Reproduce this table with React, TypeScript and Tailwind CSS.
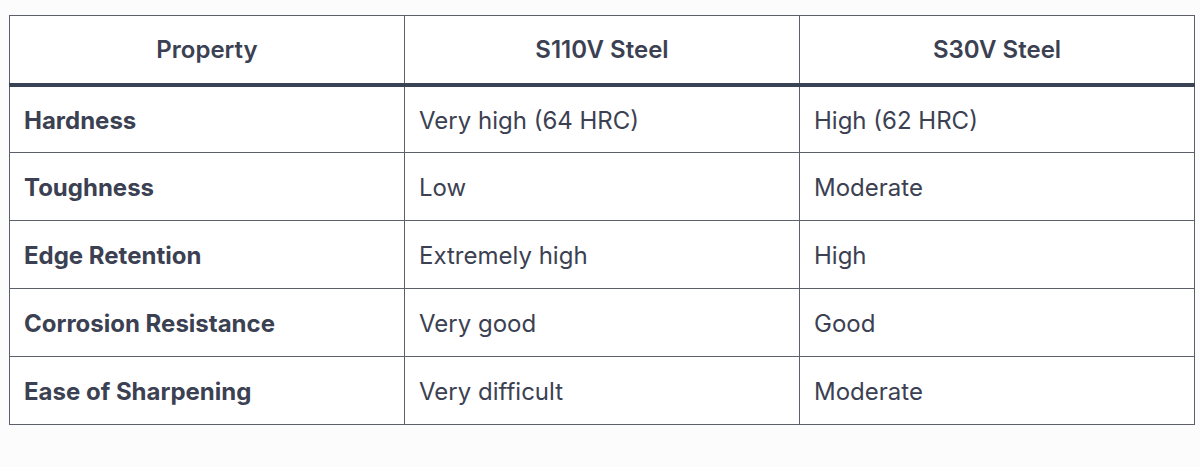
const ROWS: [string, string, string][] = [
  ['Hardness', 'Very high (64 HRC)', 'High (62 HRC)'],
  ['Toughness', 'Low', 'Moderate'],
  ['Edge Retention', 'Extremely high', 'High'],
  ['Corrosion Resistance', 'Very good', 'Good'],
  ['Ease of Sharpening', 'Very difficult', 'Moderate'],
]

const HEADERS = ['Property', 'S110V Steel', 'S30V Steel']

export default function App() {
  return (
    <div className="h-[467px] w-[1200px] bg-[#fcfcfd] pl-[9px] pt-[15px] font-['Inter',sans-serif] text-[#3b4152]">
      <table className="w-[1186px] table-fixed border-collapse bg-white text-[24px] leading-[30px]">
        <thead>
          <tr className="h-[69px] border-b-[4px] border-b-[#3a4256]">
            {HEADERS.map((h) => (
              <th key={h} className="border border-[#5c606b] pt-[2px] text-center font-semibold">
                {h}
              </th>
            ))}
          </tr>
        </thead>
        <tbody>
          {ROWS.map((row) => (
            <tr key={row[0]} className="h-[68px]">
              <td className="border border-[#5c606b] px-[14px] pt-[3px] font-bold">{row[0]}</td>
              <td className="border border-[#5c606b] px-[14px] pt-[3px]">{row[1]}</td>
              <td className="border border-[#5c606b] px-[14px] pt-[3px]">{row[2]}</td>
            </tr>
          ))}
        </tbody>
      </table>
    </div>
  )
}
